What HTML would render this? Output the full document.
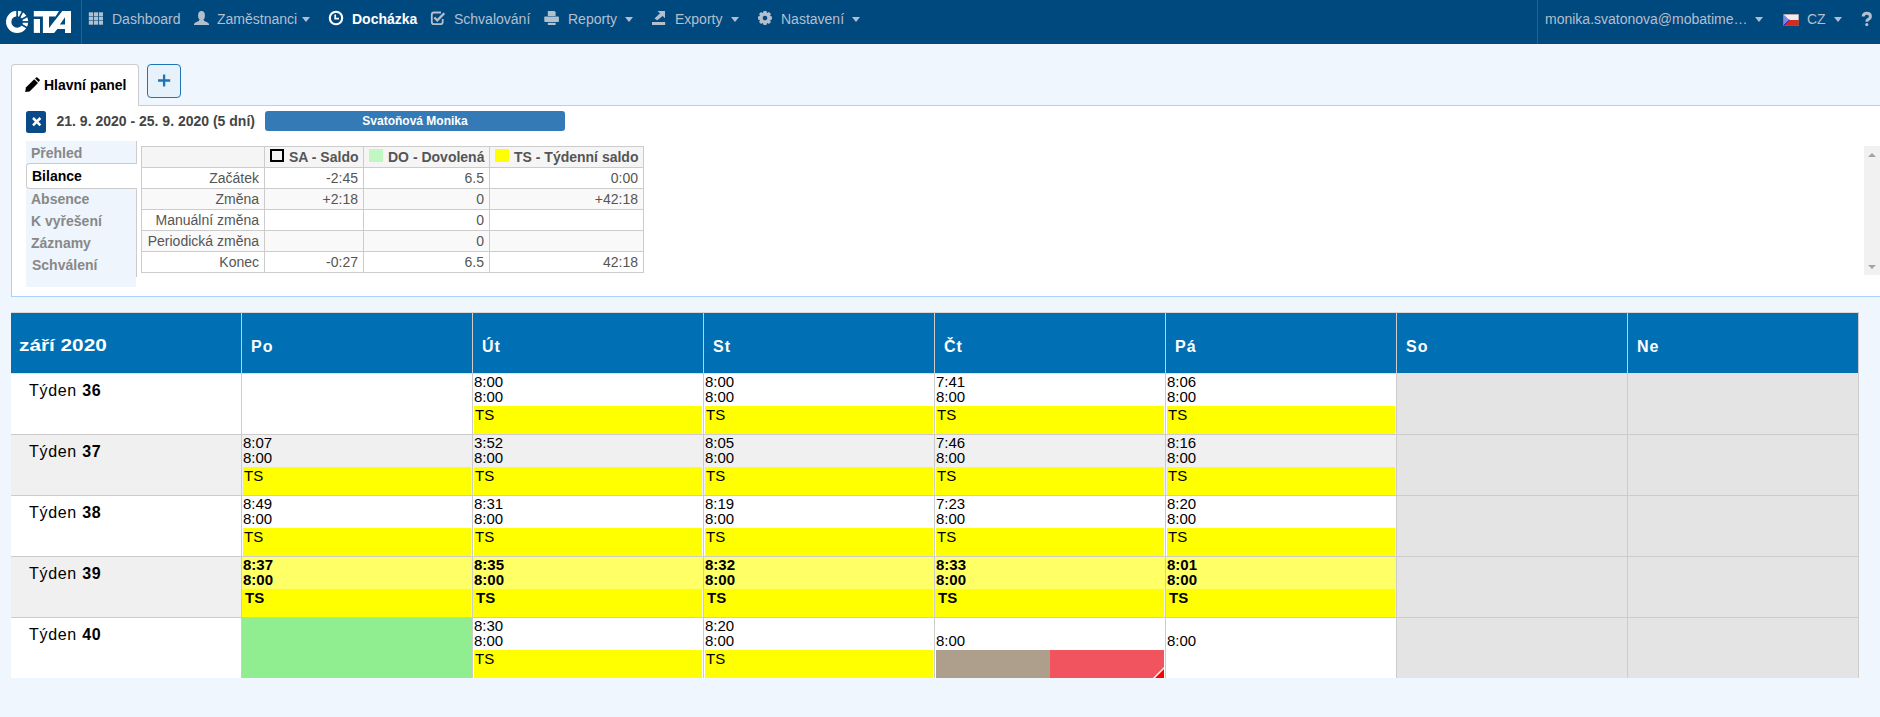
<!DOCTYPE html><html><head><meta charset="utf-8"><style>
*{box-sizing:border-box;margin:0;padding:0}
html,body{width:1880px;height:717px;overflow:hidden}
body{background:#eff6fd;font-family:"Liberation Sans",sans-serif;position:relative;color:#000}
.a{position:absolute;white-space:nowrap}
.nt{position:absolute;top:0;line-height:38px;font-size:14px;color:#b4bfcd;white-space:nowrap}
.caret{position:absolute;top:17px;width:0;height:0;border-left:4.5px solid transparent;border-right:4.5px solid transparent;border-top:5px solid #b4bfcd}
.t15{font-size:15px;line-height:15px}
.menu{position:absolute;left:31px;font-size:14px;font-weight:bold;color:#888;line-height:16px}
table.bal{position:absolute;left:141px;top:146px;border-collapse:collapse;table-layout:fixed;width:503px;font-size:14px;color:#555}
table.bal td{border:1px solid #ccc;height:21px;padding:0 5px 0 3px;text-align:right;white-space:nowrap;line-height:16px}
table.bal tr.s td{background:#f9f9f9}
table.bal tr.h td{background:#f5f5f5}
table.bal tr.h td{font-weight:bold;text-align:left;padding-left:5px}
.sq{display:inline-block;width:14px;height:13px;vertical-align:0px;margin-right:5px}
</style></head><body>
<div class="a" style="left:0;top:0;width:1880px;height:44px;background:#00497f">
<svg class="a" style="left:0;top:0" width="80" height="44" viewBox="0 0 80 44">
<circle cx="17.1" cy="21.9" r="8.4" fill="none" stroke="#fff" stroke-width="5.3"/>
<g stroke="#00497f" stroke-width="1.7">
<line x1="17.1" y1="21.9" x2="17.1" y2="9"/>
<line x1="17.1" y1="21.9" x2="23.4" y2="10.2"/>
<line x1="17.1" y1="21.9" x2="29.0" y2="15.3"/>
<line x1="17.1" y1="21.9" x2="30" y2="21.9"/>
<line x1="17.1" y1="21.9" x2="28.8" y2="28.7"/>
</g>
<path fill="#fff" d="M33.8 11 H59 L55.6 16.6 H49 V32.9 H42.9 V16.6 H33.8 Z"/>
<rect fill="#fff" x="33.8" y="19" width="6.2" height="13.9"/>
<path fill="#fff" fill-rule="evenodd" d="M62.3 11 H71 V32.9 H65 V29.1 H57.4 L54.1 32.9 H49 V27.9 Z M59.9 24.6 H65 V17.2 Z"/>
</svg>
<div class="a" style="left:81px;top:0;width:1px;height:44px;background:#2a5c9c"></div>
<div class="a" style="left:1537px;top:0;width:1px;height:44px;background:#2a5c9c"></div>
<svg class="a" style="left:88px;top:12px" width="16" height="14" viewBox="0 0 16 14"><g fill="#b4bfcd"><rect x="0.8" y="0.3" width="4.2" height="3.8"/><rect x="0.8" y="4.6" width="4.2" height="3.8"/><rect x="0.8" y="8.9" width="4.2" height="3.8"/><rect x="5.8" y="0.3" width="4.2" height="3.8"/><rect x="5.8" y="4.6" width="4.2" height="3.8"/><rect x="5.8" y="8.9" width="4.2" height="3.8"/><rect x="10.8" y="0.3" width="4.2" height="3.8"/><rect x="10.8" y="4.6" width="4.2" height="3.8"/><rect x="10.8" y="8.9" width="4.2" height="3.8"/></g></svg>
<span class="nt" style="left:112px">Dashboard</span>
<svg class="a" style="left:193px;top:10px" width="17" height="16" viewBox="0 0 17 16"><g fill="#b4bfcd"><ellipse cx="8.5" cy="5.6" rx="3.4" ry="4.6"/><path d="M1 15 V13.9 Q1.6 12.2 5.8 10.9 L6.4 9.4 H10.6 L11.2 10.9 Q15.4 12.2 16 13.9 V15 Z"/></g></svg>
<span class="nt" style="left:217px">Zaměstnanci</span><i class="caret" style="left:301.5px"></i>
<svg class="a" style="left:328px;top:10px" width="16" height="16" viewBox="0 0 16 16"><circle cx="8" cy="8" r="6.2" fill="none" stroke="#fff" stroke-width="2.1"/><path d="M7.2 4.6 V8.6 H11" fill="none" stroke="#fff" stroke-width="1.7"/></svg>
<span class="nt" style="left:352px;color:#fff;font-weight:bold">Docházka</span>
<svg class="a" style="left:430px;top:11px" width="16" height="15" viewBox="0 0 16 15"><path d="M11 1.5 H4 Q1.8 1.5 1.8 3.7 V11 Q1.8 13.2 4 13.2 H10.5 Q12.7 13.2 12.7 11 V8" fill="none" stroke="#b4bfcd" stroke-width="1.8"/><path d="M4.3 6.5 L7.3 9.3 L14.3 2.3" fill="none" stroke="#b4bfcd" stroke-width="2.3"/></svg>
<span class="nt" style="left:454px">Schvalování</span>
<svg class="a" style="left:544px;top:10px" width="16" height="16" viewBox="0 0 16 16"><g fill="#b4bfcd"><path d="M3.8 1 H10.5 L11.6 2.2 V6 H3.8 Z"/><rect x="0.3" y="6.4" width="14.6" height="5.6" rx="0.8"/><rect x="3.8" y="12.8" width="7.8" height="2.2"/></g></svg>
<span class="nt" style="left:568px">Reporty</span><i class="caret" style="left:624.5px"></i>
<svg class="a" style="left:651px;top:10px" width="16" height="16" viewBox="0 0 16 16"><g fill="#b4bfcd"><rect x="1" y="12" width="13.2" height="3"/><path d="M6.5 1 H14 V8.3 L11.7 6 L6.2 10.3 L3.5 8.5 L9 3.3 Z"/></g></svg>
<span class="nt" style="left:675px">Exporty</span><i class="caret" style="left:730.5px"></i>
<svg class="a" style="left:757px;top:10px" width="16" height="16" viewBox="0 0 16 16"><path fill="#b4bfcd" fill-rule="evenodd" d="M6.03 2.76 L6.59 1.04 L9.41 1.04 L9.97 2.76 L10.31 2.90 L11.92 2.08 L13.92 4.08 L13.10 5.69 L13.24 6.03 L14.96 6.59 L14.96 9.41 L13.24 9.97 L13.10 10.31 L13.92 11.92 L11.92 13.92 L10.31 13.10 L9.97 13.24 L9.41 14.96 L6.59 14.96 L6.03 13.24 L5.69 13.10 L4.08 13.92 L2.08 11.92 L2.90 10.31 L2.76 9.97 L1.04 9.41 L1.04 6.59 L2.76 6.03 L2.90 5.69 L2.08 4.08 L4.08 2.08 L5.69 2.90 Z M10.3 8 A2.3 2.3 0 1 0 10.3 8.01 Z"/></svg>
<span class="nt" style="left:781px">Nastavení</span><i class="caret" style="left:852px"></i>
<span class="nt" style="left:1545px">monika.svatonova@mobatime…</span><i class="caret" style="left:1755px"></i>
<svg class="a" style="left:1783px;top:14px" width="16" height="12" viewBox="0 0 16 12"><rect width="16" height="6" fill="#eeeeee"/><rect y="6" width="16" height="6" fill="#d42a1f"/><path d="M0 0 L6.5 6 L0 12 Z" fill="#8585dc"/><path d="M0 12 L6.5 6" stroke="#1f1fc0" stroke-width="1"/><rect x="0.25" y="0.25" width="15.5" height="11.5" fill="none" stroke="#7a6a6a" stroke-width="0.5"/></svg>
<span class="nt" style="left:1807px">CZ</span><i class="caret" style="left:1833.5px"></i>
<svg class="a" style="left:1860px;top:11px" width="14" height="18" viewBox="0 0 14 18"><path d="M3.2 5.6 Q3.2 2.3 6.8 2.3 Q10.4 2.3 10.4 5.4 Q10.4 7.4 8.3 8.4 Q6.8 9.2 6.8 10.8 V10.8" fill="none" stroke="#b4bfcd" stroke-width="3"/><circle cx="6.8" cy="13.6" r="1.6" fill="#b4bfcd"/></svg>
</div>
<div class="a" style="left:11px;top:105px;width:1880px;height:192px;background:#fff;border-top:1px solid #ccc;border-left:1px solid #b0d0fc;border-bottom:1px solid #b0d0fc"></div>
<div class="a" style="left:11px;top:64px;width:128px;height:42px;background:#fff;border:1px solid #ccc;border-bottom:none;border-radius:4px 4px 0 0"></div>
<div class="a" style="left:11px;top:100px;width:1px;height:6px;background:#ccc"></div>
<svg class="a" style="left:24px;top:76.5px" width="16" height="16" viewBox="0 0 16 16"><path d="M1.2 15 L1.9 10.6 L10.2 2.3 L14 6.1 L5.6 14.4 Z" fill="#000"/><path d="M11 1.5 L12.2 0.4 Q12.8 -0.1 13.4 0.4 L15.6 2.6 Q16.1 3.2 15.6 3.8 L14.6 4.9 Z" fill="#000"/></svg>
<span class="a" style="left:44px;top:77px;font-size:14px;font-weight:bold;line-height:16px">Hlavní panel</span>
<div class="a" style="left:147px;top:64px;width:34px;height:34px;background:#e6f1fa;border:1px solid #1f74b5;border-radius:4px"></div>
<svg class="a" style="left:157px;top:74px" width="14" height="14" viewBox="0 0 14 14"><path d="M1 6.5 H13.2 M7.1 0.6 V12.6" stroke="#1f74b5" stroke-width="2.3"/></svg>
<div class="a" style="left:26px;top:111px;width:20px;height:22px;background:#0a4a89;border-radius:2.5px"></div>
<svg class="a" style="left:31px;top:116px" width="11" height="11" viewBox="0 0 11 11"><path d="M2 2 L9.4 9.4 M9.4 2 L2 9.4" stroke="#fff" stroke-width="2.5"/></svg>
<span class="a" style="left:56.5px;top:113px;font-size:14px;font-weight:bold;color:#444;line-height:16px">21. 9. 2020 - 25. 9. 2020 (5 dní)</span>
<div class="a" style="left:265px;top:111px;width:300px;height:20px;background:#337ab7;border-radius:3px;color:#fff;font-size:12px;font-weight:bold;text-align:center;line-height:21px">Svatoňová Monika</div>
<div class="a" style="left:26px;top:141px;width:110px;height:146px;background:#eef5fc"></div>
<div class="a" style="left:136px;top:141px;width:1px;height:136px;background:#ccc"></div>
<div class="a" style="left:26px;top:163px;width:111px;height:26px;background:#fff;border:1px solid #ccc;border-right:none;border-radius:4px 0 0 4px"></div>
<span class="menu" style="top:145px;left:31px;color:#888">Přehled</span>
<span class="menu" style="top:168px;left:32px;color:#000">Bilance</span>
<span class="menu" style="top:191px;left:31px;color:#888">Absence</span>
<span class="menu" style="top:213px;left:31px;color:#888">K vyřešení</span>
<span class="menu" style="top:235px;left:31px;color:#888">Záznamy</span>
<span class="menu" style="top:257px;left:32px;color:#888">Schválení</span>
<table class="bal"><colgroup><col style="width:123px"><col style="width:99px"><col style="width:126px"><col style="width:154px"></colgroup>
<tr class="h s"><td style="width:123px"></td><td style="width:98px"><i class="sq" style="border:2px solid #000"></i>SA - Saldo</td><td style="width:125px"><i class="sq" style="background:#c1f7c1"></i>DO - Dovolená</td><td style="width:153px"><i class="sq" style="background:#ffff00"></i>TS - Týdenní saldo</td></tr>
<tr><td>Začátek</td><td>-2:45</td><td>6.5</td><td>0:00</td></tr>
<tr class="s"><td>Změna</td><td>+2:18</td><td>0</td><td>+42:18</td></tr>
<tr><td>Manuální změna</td><td></td><td>0</td><td></td></tr>
<tr class="s"><td>Periodická změna</td><td></td><td>0</td><td></td></tr>
<tr><td>Konec</td><td>-0:27</td><td>6.5</td><td>42:18</td></tr>
</table>
<div class="a" style="left:1864px;top:146px;width:16px;height:129px;background:#f1f1f1"></div>
<div class="a" style="left:1868px;top:153px;width:0;height:0;border-left:4px solid transparent;border-right:4px solid transparent;border-bottom:4px solid #a3a3a3"></div>
<div class="a" style="left:1868px;top:265px;width:0;height:0;border-left:4px solid transparent;border-right:4px solid transparent;border-top:4px solid #a3a3a3"></div>
<div class="a" style="left:11px;top:312px;width:1848px;height:61px;background:#006fb3;border-top:1px solid #ddd8d4"></div>
<div class="a" style="left:11px;top:373px;width:1848px;height:1px;background:#e0e0e0"></div>
<span class="a" style="left:19px;top:337px;font-size:16px;font-weight:bold;color:#fff;line-height:18px;transform:scaleX(1.298);transform-origin:0 0">září 2020</span>
<span class="a" style="left:251px;top:338px;font-size:16px;font-weight:bold;color:#fff;line-height:18px;letter-spacing:1px">Po</span>
<span class="a" style="left:482px;top:338px;font-size:16px;font-weight:bold;color:#fff;line-height:18px;letter-spacing:1px">Út</span>
<span class="a" style="left:713px;top:338px;font-size:16px;font-weight:bold;color:#fff;line-height:18px;letter-spacing:1px">St</span>
<span class="a" style="left:944px;top:338px;font-size:16px;font-weight:bold;color:#fff;line-height:18px;letter-spacing:1px">Čt</span>
<span class="a" style="left:1175px;top:338px;font-size:16px;font-weight:bold;color:#fff;line-height:18px;letter-spacing:1px">Pá</span>
<span class="a" style="left:1406px;top:338px;font-size:16px;font-weight:bold;color:#fff;line-height:18px;letter-spacing:1px">So</span>
<span class="a" style="left:1637px;top:338px;font-size:16px;font-weight:bold;color:#fff;line-height:18px;letter-spacing:1px">Ne</span>
<div class="a" style="left:11px;top:374px;width:1847px;height:60px;background:#fff"></div>
<div class="a" style="left:11px;top:434px;width:1848px;height:1px;background:#cccccc"></div>
<span class="a" style="left:29px;top:382px;font-size:16px;line-height:18px;letter-spacing:0.7px">Týden <b>36</b></span>
<span class="a t15" style="left:474px;top:374px;">8:00</span>
<span class="a t15" style="left:474px;top:389px;">8:00</span>
<div class="a" style="left:474px;top:406px;width:228px;height:28px;background:#ffff00"></div>
<span class="a t15" style="left:475px;top:407px;">TS</span>
<span class="a t15" style="left:705px;top:374px;">8:00</span>
<span class="a t15" style="left:705px;top:389px;">8:00</span>
<div class="a" style="left:705px;top:406px;width:228px;height:28px;background:#ffff00"></div>
<span class="a t15" style="left:706px;top:407px;">TS</span>
<span class="a t15" style="left:936px;top:374px;">7:41</span>
<span class="a t15" style="left:936px;top:389px;">8:00</span>
<div class="a" style="left:936px;top:406px;width:228px;height:28px;background:#ffff00"></div>
<span class="a t15" style="left:937px;top:407px;">TS</span>
<span class="a t15" style="left:1167px;top:374px;">8:06</span>
<span class="a t15" style="left:1167px;top:389px;">8:00</span>
<div class="a" style="left:1167px;top:406px;width:228px;height:28px;background:#ffff00"></div>
<span class="a t15" style="left:1168px;top:407px;">TS</span>
<div class="a" style="left:1397px;top:374px;width:230px;height:60px;background:#e4e4e4"></div>
<div class="a" style="left:1628px;top:374px;width:230px;height:60px;background:#e4e4e4"></div>
<div class="a" style="left:11px;top:435px;width:1847px;height:60px;background:#f0f0f0"></div>
<div class="a" style="left:11px;top:495px;width:1848px;height:1px;background:#cccccc"></div>
<span class="a" style="left:29px;top:443px;font-size:16px;line-height:18px;letter-spacing:0.7px">Týden <b>37</b></span>
<span class="a t15" style="left:243px;top:435px;">8:07</span>
<span class="a t15" style="left:243px;top:450px;">8:00</span>
<div class="a" style="left:243px;top:467px;width:228px;height:28px;background:#ffff00"></div>
<span class="a t15" style="left:244px;top:468px;">TS</span>
<span class="a t15" style="left:474px;top:435px;">3:52</span>
<span class="a t15" style="left:474px;top:450px;">8:00</span>
<div class="a" style="left:474px;top:467px;width:228px;height:28px;background:#ffff00"></div>
<span class="a t15" style="left:475px;top:468px;">TS</span>
<span class="a t15" style="left:705px;top:435px;">8:05</span>
<span class="a t15" style="left:705px;top:450px;">8:00</span>
<div class="a" style="left:705px;top:467px;width:228px;height:28px;background:#ffff00"></div>
<span class="a t15" style="left:706px;top:468px;">TS</span>
<span class="a t15" style="left:936px;top:435px;">7:46</span>
<span class="a t15" style="left:936px;top:450px;">8:00</span>
<div class="a" style="left:936px;top:467px;width:228px;height:28px;background:#ffff00"></div>
<span class="a t15" style="left:937px;top:468px;">TS</span>
<span class="a t15" style="left:1167px;top:435px;">8:16</span>
<span class="a t15" style="left:1167px;top:450px;">8:00</span>
<div class="a" style="left:1167px;top:467px;width:228px;height:28px;background:#ffff00"></div>
<span class="a t15" style="left:1168px;top:468px;">TS</span>
<div class="a" style="left:1397px;top:435px;width:230px;height:60px;background:#e4e4e4"></div>
<div class="a" style="left:1628px;top:435px;width:230px;height:60px;background:#e4e4e4"></div>
<div class="a" style="left:11px;top:496px;width:1847px;height:60px;background:#fff"></div>
<div class="a" style="left:11px;top:556px;width:1848px;height:1px;background:#cccccc"></div>
<span class="a" style="left:29px;top:504px;font-size:16px;line-height:18px;letter-spacing:0.7px">Týden <b>38</b></span>
<span class="a t15" style="left:243px;top:496px;">8:49</span>
<span class="a t15" style="left:243px;top:511px;">8:00</span>
<div class="a" style="left:243px;top:528px;width:228px;height:28px;background:#ffff00"></div>
<span class="a t15" style="left:244px;top:529px;">TS</span>
<span class="a t15" style="left:474px;top:496px;">8:31</span>
<span class="a t15" style="left:474px;top:511px;">8:00</span>
<div class="a" style="left:474px;top:528px;width:228px;height:28px;background:#ffff00"></div>
<span class="a t15" style="left:475px;top:529px;">TS</span>
<span class="a t15" style="left:705px;top:496px;">8:19</span>
<span class="a t15" style="left:705px;top:511px;">8:00</span>
<div class="a" style="left:705px;top:528px;width:228px;height:28px;background:#ffff00"></div>
<span class="a t15" style="left:706px;top:529px;">TS</span>
<span class="a t15" style="left:936px;top:496px;">7:23</span>
<span class="a t15" style="left:936px;top:511px;">8:00</span>
<div class="a" style="left:936px;top:528px;width:228px;height:28px;background:#ffff00"></div>
<span class="a t15" style="left:937px;top:529px;">TS</span>
<span class="a t15" style="left:1167px;top:496px;">8:20</span>
<span class="a t15" style="left:1167px;top:511px;">8:00</span>
<div class="a" style="left:1167px;top:528px;width:228px;height:28px;background:#ffff00"></div>
<span class="a t15" style="left:1168px;top:529px;">TS</span>
<div class="a" style="left:1397px;top:496px;width:230px;height:60px;background:#e4e4e4"></div>
<div class="a" style="left:1628px;top:496px;width:230px;height:60px;background:#e4e4e4"></div>
<div class="a" style="left:11px;top:557px;width:1847px;height:60px;background:#f0f0f0"></div>
<div class="a" style="left:11px;top:617px;width:1848px;height:1px;background:#cccccc"></div>
<span class="a" style="left:29px;top:565px;font-size:16px;line-height:18px;letter-spacing:0.7px">Týden <b>39</b></span>
<div class="a" style="left:242px;top:557px;width:230px;height:32px;background:#ffff66"></div>
<span class="a t15" style="left:243px;top:557px;font-weight:bold;">8:37</span>
<span class="a t15" style="left:243px;top:572px;font-weight:bold;">8:00</span>
<div class="a" style="left:242px;top:589px;width:229px;height:28px;background:#ffff00"></div>
<span class="a t15" style="left:245px;top:590px;font-weight:bold;">TS</span>
<div class="a" style="left:473px;top:557px;width:230px;height:32px;background:#ffff66"></div>
<span class="a t15" style="left:474px;top:557px;font-weight:bold;">8:35</span>
<span class="a t15" style="left:474px;top:572px;font-weight:bold;">8:00</span>
<div class="a" style="left:473px;top:589px;width:229px;height:28px;background:#ffff00"></div>
<span class="a t15" style="left:476px;top:590px;font-weight:bold;">TS</span>
<div class="a" style="left:704px;top:557px;width:230px;height:32px;background:#ffff66"></div>
<span class="a t15" style="left:705px;top:557px;font-weight:bold;">8:32</span>
<span class="a t15" style="left:705px;top:572px;font-weight:bold;">8:00</span>
<div class="a" style="left:704px;top:589px;width:229px;height:28px;background:#ffff00"></div>
<span class="a t15" style="left:707px;top:590px;font-weight:bold;">TS</span>
<div class="a" style="left:935px;top:557px;width:230px;height:32px;background:#ffff66"></div>
<span class="a t15" style="left:936px;top:557px;font-weight:bold;">8:33</span>
<span class="a t15" style="left:936px;top:572px;font-weight:bold;">8:00</span>
<div class="a" style="left:935px;top:589px;width:229px;height:28px;background:#ffff00"></div>
<span class="a t15" style="left:938px;top:590px;font-weight:bold;">TS</span>
<div class="a" style="left:1166px;top:557px;width:230px;height:32px;background:#ffff66"></div>
<span class="a t15" style="left:1167px;top:557px;font-weight:bold;">8:01</span>
<span class="a t15" style="left:1167px;top:572px;font-weight:bold;">8:00</span>
<div class="a" style="left:1166px;top:589px;width:229px;height:28px;background:#ffff00"></div>
<span class="a t15" style="left:1169px;top:590px;font-weight:bold;">TS</span>
<div class="a" style="left:1397px;top:557px;width:230px;height:60px;background:#e4e4e4"></div>
<div class="a" style="left:1628px;top:557px;width:230px;height:60px;background:#e4e4e4"></div>
<div class="a" style="left:11px;top:618px;width:1847px;height:60px;background:#fff"></div>
<span class="a" style="left:29px;top:626px;font-size:16px;line-height:18px;letter-spacing:0.7px">Týden <b>40</b></span>
<div class="a" style="left:242px;top:618px;width:230px;height:60px;background:#90ee90"></div>
<span class="a t15" style="left:474px;top:618px;">8:30</span>
<span class="a t15" style="left:474px;top:633px;">8:00</span>
<div class="a" style="left:474px;top:650px;width:228px;height:28px;background:#ffff00"></div>
<span class="a t15" style="left:475px;top:651px;">TS</span>
<span class="a t15" style="left:705px;top:618px;">8:20</span>
<span class="a t15" style="left:705px;top:633px;">8:00</span>
<div class="a" style="left:705px;top:650px;width:228px;height:28px;background:#ffff00"></div>
<span class="a t15" style="left:706px;top:651px;">TS</span>
<span class="a t15" style="left:936px;top:633px">8:00</span>
<div class="a" style="left:936px;top:650px;width:114px;height:28px;background:#ad9f8c"></div>
<div class="a" style="left:1050px;top:650px;width:114px;height:28px;background:#f2545f"></div>
<svg class="a" style="left:1153px;top:667px" width="11" height="11" viewBox="0 0 11 11"><path d="M11 0 V11 H0 Z" fill="#fff"/><path d="M11 2 V11 H2 Z" fill="#ff0000"/></svg>
<span class="a t15" style="left:1167px;top:633px">8:00</span>
<div class="a" style="left:1397px;top:618px;width:230px;height:60px;background:#e4e4e4"></div>
<div class="a" style="left:1628px;top:618px;width:230px;height:60px;background:#e4e4e4"></div>
<div class="a" style="left:241px;top:312px;width:1px;height:366px;background:#cccccc"></div>
<div class="a" style="left:472px;top:312px;width:1px;height:366px;background:#cccccc"></div>
<div class="a" style="left:703px;top:312px;width:1px;height:366px;background:#cccccc"></div>
<div class="a" style="left:934px;top:312px;width:1px;height:366px;background:#cccccc"></div>
<div class="a" style="left:1165px;top:312px;width:1px;height:366px;background:#cccccc"></div>
<div class="a" style="left:1396px;top:312px;width:1px;height:366px;background:#cccccc"></div>
<div class="a" style="left:1627px;top:312px;width:1px;height:366px;background:#cccccc"></div>
<div class="a" style="left:1858px;top:312px;width:1px;height:366px;background:#cccccc"></div>
</body></html>
